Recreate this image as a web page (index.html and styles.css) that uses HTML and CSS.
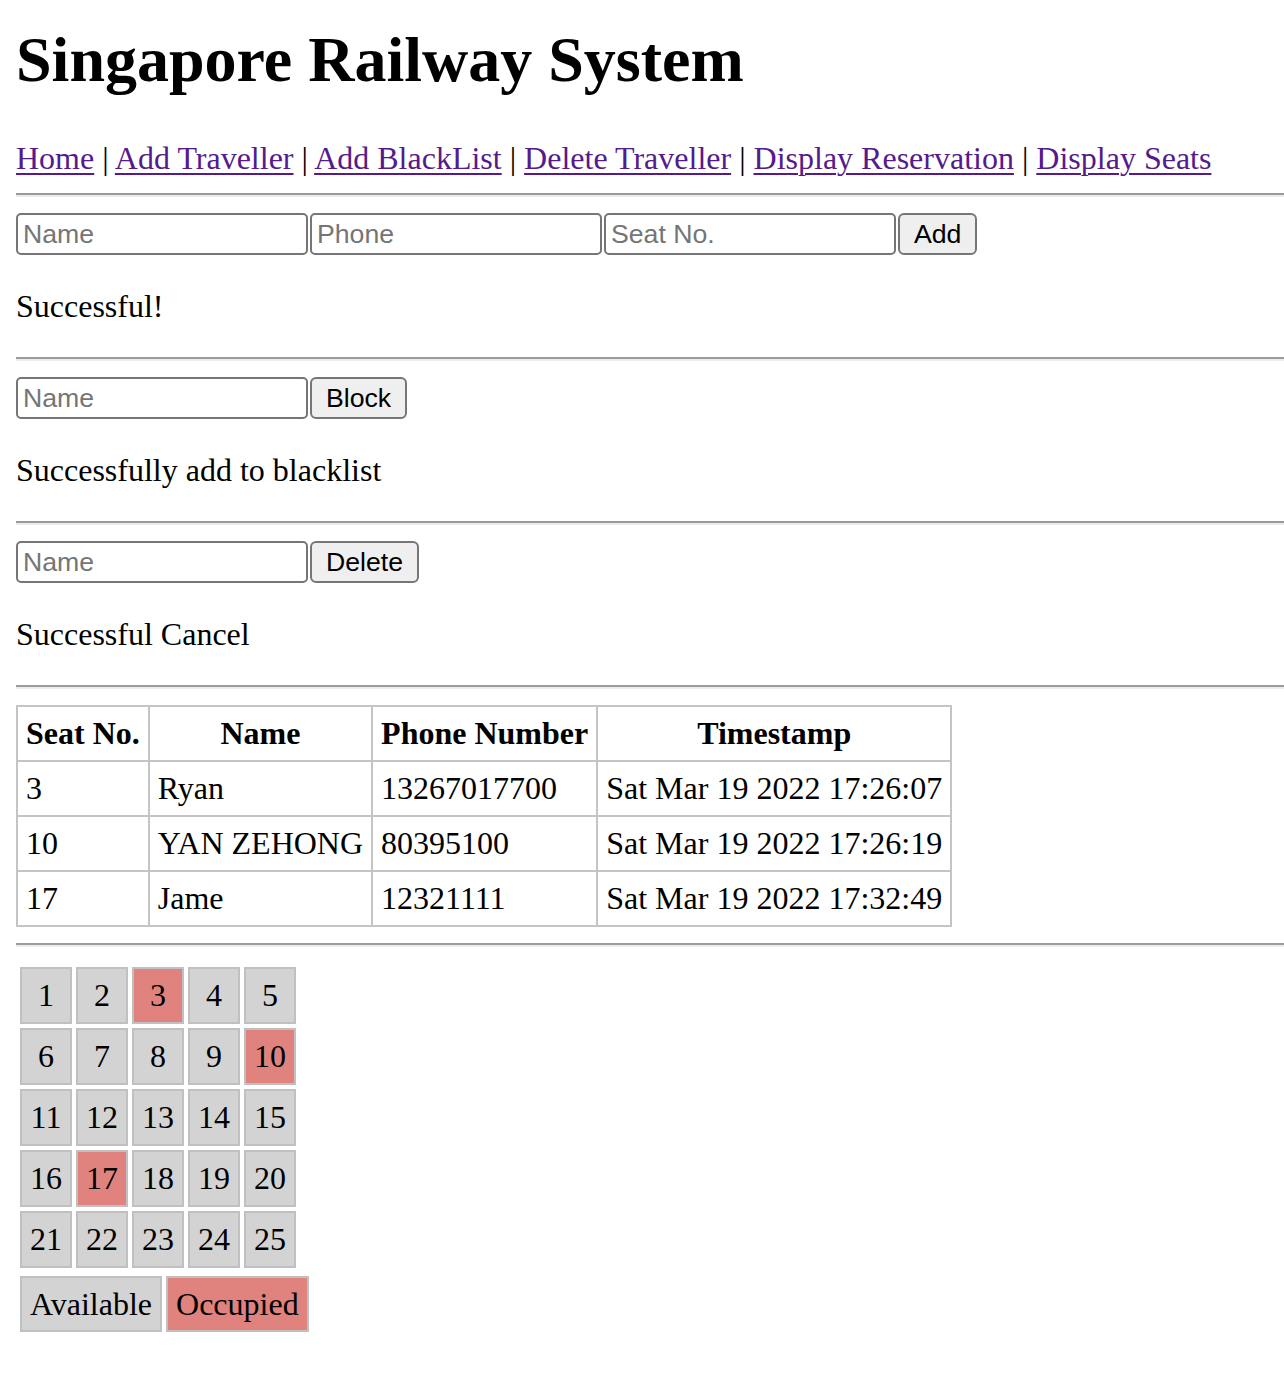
FILE: index.html
```html
<!DOCTYPE html>
<html>
<head>
<meta charset="utf-8">
<title>Singapore Railway System</title>
<link rel="stylesheet" href="styles.css">
</head>
<body class="page">
<h1 class="title">Singapore Railway System</h1>
<div class="nav"><a class="link" href="#">Home</a> | <a class="link" href="#">Add Traveller</a> | <a class="link" href="#">Add BlackList</a> | <a class="link" href="#">Delete Traveller</a> | <a class="link" href="#">Display Reservation</a> | <a class="link" href="#">Display Seats</a></div>
<hr class="rule">
<div class="form-row"><input class="field" placeholder="Name"><input class="field" placeholder="Phone"><input class="field" placeholder="Seat No."><button class="btn">Add</button></div>
<p class="msg">Successful!</p>
<hr class="rule">
<div class="form-row"><input class="field" placeholder="Name"><button class="btn">Block</button></div>
<p class="msg">Successfully add to blacklist</p>
<hr class="rule">
<div class="form-row"><input class="field" placeholder="Name"><button class="btn">Delete</button></div>
<p class="msg">Successful Cancel</p>
<hr class="rule">
<table class="res">
<tr><th>Seat No.</th><th>Name</th><th>Phone Number</th><th>Timestamp</th></tr>
<tr><td>3</td><td>Ryan</td><td>13267017700</td><td>Sat Mar 19 2022 17:26:07</td></tr>
<tr><td>10</td><td>YAN ZEHONG</td><td>80395100</td><td>Sat Mar 19 2022 17:26:19</td></tr>
<tr><td>17</td><td>Jame</td><td>12321111</td><td>Sat Mar 19 2022 17:32:49</td></tr>
</table>
<hr class="rule">
<div class="seats">
<div class="seat">1</div><div class="seat">2</div><div class="seat occupied">3</div><div class="seat">4</div><div class="seat">5</div>
<div class="seat">6</div><div class="seat">7</div><div class="seat">8</div><div class="seat">9</div><div class="seat occupied">10</div>
<div class="seat">11</div><div class="seat">12</div><div class="seat">13</div><div class="seat">14</div><div class="seat">15</div>
<div class="seat">16</div><div class="seat occupied">17</div><div class="seat">18</div><div class="seat">19</div><div class="seat">20</div>
<div class="seat">21</div><div class="seat">22</div><div class="seat">23</div><div class="seat">24</div><div class="seat">25</div>
</div>
<div class="legend">
<div class="key">Available</div><div class="key occupied">Occupied</div>
</div>
</body>
</html>
```

FILE: styles.css
```css
html { margin: 0; padding: 0; background: #fff; }
.page {
  margin: 0;
  padding: 0 0 0 16px;
  font-family: "Liberation Serif", "Times New Roman", serif;
  font-size: 32px;
  color: #000;
}
.title {
  font-size: 64px;
  font-weight: bold;
  line-height: 74px;
  margin: 23px 0 43px;
}
.nav {
  line-height: 37px;
  height: 37px;
  white-space: nowrap;
}
.link { color: #551a8b; text-decoration: underline; text-underline-offset: 4px; text-decoration-thickness: 2px; }
.rule {
  margin: 16px 0;
  height: 0;
  border: none;
  border-top: 2px solid #9b9b9b;
  border-bottom: 2px solid #ececec;
}
.form-row {
  display: flex;
  gap: 2px;
  height: 42px;
}
.field {
  width: 292px;
  height: 42px;
  box-sizing: border-box;
  margin: 0;
  border: 2px solid #767676;
  border-radius: 5px;
  padding: 0 5px;
  font-family: "Liberation Sans", Arial, sans-serif;
  font-size: 26.67px;
  background: #fff;
}
.field::placeholder { color: #757575; }
.btn {
  height: 42px;
  box-sizing: border-box;
  margin: 0;
  padding: 0 14px;
  border: 2px solid #767676;
  border-radius: 6px;
  background: #efefef;
  color: #000;
  font-family: "Liberation Sans", Arial, sans-serif;
  font-size: 26.67px;
}
.msg {
  margin: 32px 0;
  line-height: 38px;
}
.res {
  border-collapse: collapse;
  font-size: 32px;
}
.res th, .res td {
  border: 2px solid #c4c4c4;
  padding: 8px;
  line-height: 37px;
  white-space: nowrap;
}
.res th { text-align: center; font-weight: bold; }
.res td { text-align: left; }
.seats {
  display: grid;
  grid-template-columns: repeat(5, 52px);
  grid-auto-rows: 57px;
  gap: 4px;
  padding: 4px;
  width: max-content;
}
.seat, .key {
  box-sizing: border-box;
  border: 2px solid #c0c0c0;
  background: #d3d3d3;
  display: flex;
  align-items: center;
  justify-content: center;
}
.seat.occupied, .key.occupied { background: #e0837f; }
.legend {
  display: flex;
  gap: 4px;
  padding: 4px;
}
.key {
  height: 56px;
  padding: 0 8px;
}
```
